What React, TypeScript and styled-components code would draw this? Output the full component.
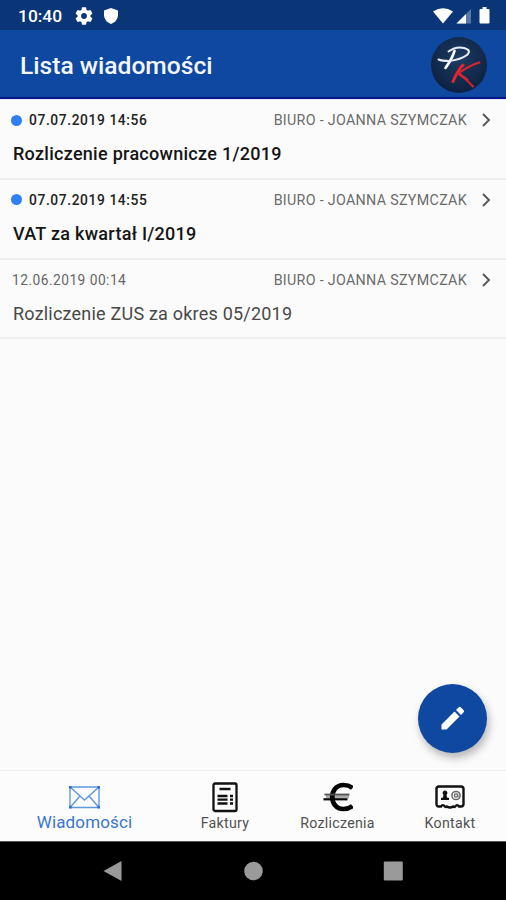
import React from "react";
import styled, { createGlobalStyle } from "styled-components";

const Global = createGlobalStyle`
  *{box-sizing:border-box}
  body{margin:0;background:#fafafa;font-family:Roboto,"Liberation Sans",sans-serif}
`;
const Screen = styled.div`
  width:506px;height:900px;display:flex;flex-direction:column;
  background:#fbfbfb;overflow:hidden;position:relative;
`;
const StatusBar = styled.div`
  height:30px;background:#0a3576;display:flex;align-items:center;
  justify-content:space-between;padding:1px 13px 0 18px;color:#fff;
`;
const StatusGroup = styled.div<{ $gap: number }>`
  display:flex;align-items:center;gap:${(p) => p.$gap}px;
`;
const Clock = styled.span`
  width:44px;margin-right:2px;font-size:17.4px;font-weight:500;line-height:20px;white-space:nowrap;
`;
const AppBar = styled.header`
  height:69px;background:#0e48a0;border-bottom:2px solid #06158c;
  display:flex;align-items:center;justify-content:space-between;padding:2px 19px 0 20px;
`;
const Title = styled.h1`
  margin:2px 0 0;font-size:24.6px;font-weight:500;color:#f4f7ff;line-height:30px;white-space:nowrap;
`;
const List = styled.main`
  flex:1;border-top:1px solid #e9e9f2;
`;
const Row = styled.article`
  height:79.8px;padding:10px 13px 0 12px;border-bottom:2px solid #eee;
`;
const Meta = styled.div`
  display:flex;align-items:center;height:20px;font-size:14.3px;line-height:20px;
`;
const Dot = styled.i`
  width:11px;height:11px;border-radius:50%;background:#2f80f5;margin:0 7px 0 -1px;
`;
const DateText = styled.span<{ $unread: boolean }>`
  font-size:13.8px;
  font-weight:${(p) => (p.$unread ? 500 : 400)};color:${(p) => (p.$unread ? "#222" : "#666")};
  letter-spacing:${(p) => (p.$unread ? 0.6 : 0.45)}px;white-space:nowrap;
`;
const Sender = styled.span`
  margin-left:auto;margin-right:12px;color:#6b6b6b;letter-spacing:.3px;white-space:nowrap;
`;
const Subject = styled.h2<{ $unread: boolean }>`
  margin:12px 0 0 1px;font-size:18px;line-height:24px;
  letter-spacing:${(p) => (p.$unread ? 0.28 : 0.21)}px;
  font-weight:${(p) => (p.$unread ? 500 : 400)};color:${(p) => (p.$unread ? "#151515" : "#484848")};
`;
const Fab = styled.button`
  position:absolute;left:418px;top:684px;width:69px;height:69px;border:0;border-radius:50%;padding:0 0 2px;
  background:#0e48a0;box-shadow:2px 5px 9px rgba(0,0,0,.28);display:grid;place-items:center;
`;
const TabBar = styled.nav`
  height:71px;border-top:1px solid #f0f0f0;background:#fcfcfc;display:grid;
  grid-template-columns:169px 112px 113px 112px;
`;
const Tab = styled.div<{ $active?: boolean }>`
  display:flex;flex-direction:column;align-items:center;padding-top:11px;white-space:nowrap;
  color:${(p) => (p.$active ? "#3b76cb" : "#505050")};
  font-size:${(p) => (p.$active ? 17 : 14.2)}px;line-height:20px;letter-spacing:${(p) => (p.$active ? 0.15 : 0.28)}px;
  svg{height:31px;flex:none}
  span{margin-top:${(p) => (p.$active ? -1 : 0)}px}
`;
const SystemNav = styled.div`
  height:59px;background:#000;border-top:1px solid #555;display:flex;justify-content:center;gap:120px;
  padding:18px 0 0;
`;

const Logo = () => (
  <svg width="56" height="56" viewBox="0 0 56 56">
    <defs>
      <radialGradient id="disc" cx="50%" cy="38%" r="62%">
        <stop offset="0" stopColor="#1c3c63" />
        <stop offset="1" stopColor="#0d2140" />
      </radialGradient>
    </defs>
    <circle cx="28" cy="28" r="28" fill="url(#disc)" />
    <g fill="none" strokeLinecap="round" strokeLinejoin="round">
      <path d="M23.500 14Q21 22 14.500 31" stroke="#fff" strokeWidth="2.600" />
      <path d="M17.500 14.500Q25 9 33 11Q41 13 36 18Q30 22.500 18 24Q11 24 7.500 22.500" stroke="#e8edf5" strokeWidth="2" />
      <path d="M32 28Q27 33 22 44.500" stroke="#e8252d" strokeWidth="3" />
      <path d="M48.500 25.500Q38 28.500 27.500 36.500Q34 41 42 49.500" stroke="#dd232d" strokeWidth="2" />
      <path d="M27.500 36.500L36 42.500" stroke="#dd232d" strokeWidth="2.600" />
    </g>
  </svg>
);

const rows = [
  { date: "07.07.2019 14:56", subject: "Rozliczenie pracownicze 1/2019", unread: true },
  { date: "07.07.2019 14:55", subject: "VAT za kwartał I/2019", unread: true },
  { date: "12.06.2019 00:14", subject: "Rozliczenie ZUS za okres 05/2019", unread: false },
];

export default function App() {
  return (
    <>
      <Global />
      <Screen>
        <StatusBar>
          <StatusGroup $gap={11}>
            <Clock>10:40</Clock>
            <svg width="18" height="18" viewBox="2 2 20 20" fill="#fff">
              <path d="M19.140 12.940c.04-.3.06-.61.06-.94s-.02-.64-.07-.94l2.030-1.580a.5.5 0 0 0 .12-.61l-1.920-3.320a.5.5 0 0 0-.59-.22l-2.390.96a7 7 0 0 0-1.620-.94L14.400 2.810a.5.5 0 0 0-.48-.41h-3.840a.5.5 0 0 0-.47.41l-.36 2.540a7 7 0 0 0-1.620.94l-2.390-.96a.5.5 0 0 0-.59.22L2.740 8.870a.5.5 0 0 0 .12.61l2.030 1.580a6 6 0 0 0 0 1.880l-2.030 1.580a.5.5 0 0 0-.12.61l1.920 3.320c.12.22.37.29.59.22l2.390-.96c.5.38 1.030.7 1.620.94l.36 2.540c.05.24.24.41.48.41h3.840c.24 0 .44-.17.47-.41l.36-2.540a7 7 0 0 0 1.620-.94l2.390.96c.22.08.47 0 .59-.22l1.920-3.320a.5.5 0 0 0-.12-.61zM12 15.200a3.200 3.200 0 1 1 0-6.400 3.200 3.200 0 0 1 0 6.400z" />
            </svg>
            <svg width="14" height="16" viewBox="0 0 14 16" fill="#fff"><path d="M7 0 14 2.500V7.500Q13.500 13.500 7 16 .5 13.500 0 7.500V2.500Z" /></svg>
          </StatusGroup>
          <StatusGroup $gap={3}>
            <svg width="20" height="16" viewBox="0 0 20 16" fill="#fff"><path d="M0 3.500Q10-3 20 3.500L10 15.500Z" /></svg>
            <svg width="16" height="16" viewBox="0 0 16 16"><path d="M15 1V15.500H.5Z" fill="#5879a5" /><path d="M10 6V15.500H.5Z" fill="#fff" /></svg>
            <svg width="18" height="17" viewBox="0 0 18 17" fill="#fff"><path d="M7.500 0h4v2h2a1 1 0 0 1 1 1v12.500a1 1 0 0 1-1 1h-8a1 1 0 0 1-1-1V3a1 1 0 0 1 1-1h2z" /></svg>
          </StatusGroup>
        </StatusBar>
        <AppBar><Title>Lista wiadomości</Title><Logo /></AppBar>
        <List>
          {rows.map((r) => (
            <Row key={r.date}>
              <Meta>
                {r.unread && <Dot />}
                <DateText $unread={r.unread}>{r.date}</DateText>
                <Sender>BIURO - JOANNA SZYMCZAK</Sender>
                <svg width="14" height="16" viewBox="0 0 14 16" fill="none" stroke="#555" strokeWidth="1.900"><path d="m4 2 6 6-6 6" /></svg>
              </Meta>
              <Subject $unread={r.unread}>{r.subject}</Subject>
            </Row>
          ))}
        </List>
        <TabBar>
          <Tab $active>
            <svg width="31" height="31" viewBox="0 0 31 31" fill="none" stroke="#5f97dd" strokeWidth="1.400">
              <path d="M1 5h29v20.500H1ZM1 5l14.500 13L30 5M1 25.500l10-11.500M30 25.500 20 14" />
              <path d="M0 4h2.500v2.500H0ZM28.500 4H31v2.500h-2.500ZM0 24h2.500v2.500H0ZM28.500 24H31v2.500h-2.500Z" fill="#2f70cd" stroke="none" />
            </svg>
            <span>Wiadomości</span>
          </Tab>
          <Tab>
            <svg width="26" height="31" viewBox="0 0 26 31" fill="none" stroke="#111" strokeWidth="2.300">
              <rect x="1.500" y="1.500" width="23" height="27.500" rx="1.500" />
              <path d="M7.500 7h11M5.500 14h10M5.500 17.700h10M5.500 21.500h10M18 14h3M18 17.700h3M18 21.500h3" />
            </svg>
            <span>Faktury</span>
          </Tab>
          <Tab>
            <svg width="30" height="31" viewBox="0 0 30 31" fill="none" stroke="#050505">
              <path d="M3 14.500h23" stroke="#aaa" strokeWidth="3" />
              <path d="M29.500 6Q26 3 20.500 3C5.500 3 5.500 27 20.500 27Q26 27 29.500 24" strokeWidth="4.700" />
              <path d="M1.500 12.500h25" stroke="#555" strokeWidth="1.800" />
              <path d="M.5 17.300h24" strokeWidth="2.200" />
            </svg>
            <span>Rozliczenia</span>
          </Tab>
          <Tab>
            <svg width="30" height="31" viewBox="0 0 30 31" fill="none" stroke="#111" strokeWidth="2.400">
              <path d="M6 24.500H4q-2.500 0-2.500-2.500V7Q1.500 4.500 4 4.500h22q2.500 0 2.500 2.500v15q0 2.500-2.500 2.500h-2q-1.800-2.800-3.800 0-1 1-2 0-1.700 1-3.200 1t-3.200-1q-1 1-2 0Q7.800 21.700 6 24.500Z" />
              <path d="M10 8.500a2.400 2.400 0 0 1 1.600 4.200L12 15.500l2 .6V18H6v-1.900l2-.6.4-2.800A2.400 2.400 0 0 1 10 8.500Z" fill="#111" stroke="none" />
              <circle cx="21" cy="13.500" r="4.100" stroke="#666" strokeWidth="1.500" /><circle cx="21" cy="13.500" r="1.600" stroke="#666" strokeWidth="1.400" />
              <path d="M22.800 11.500v3.500h2" stroke="#777" strokeWidth="1" />
            </svg>
            <span>Kontakt</span>
          </Tab>
        </TabBar>
        <SystemNav>
          <svg width="20" height="22" viewBox="0 0 20 22"><path d="M.500 11 18.500 1V21Z" fill="#9a9a9a" /></svg>
          <svg width="20" height="22" viewBox="0 0 20 22"><circle cx="10.500" cy="11" r="9.300" fill="#9a9a9a" /></svg>
          <svg width="20" height="22" viewBox="0 0 20 22"><rect x=".8" y="1.500" width="19" height="19" rx="1" fill="#9a9a9a" /></svg>
        </SystemNav>
        <Fab aria-label="Nowa wiadomość">
          <svg width="24" height="24" viewBox="0 0 24 24" fill="#fff"><path d="M.5 18.500 13.500 5.500l5 5-13 13h-5ZM15 4l2.700-2.700q1-1 2 0l3 3q1 1 0 2L20 9Z" /></svg>
        </Fab>
      </Screen>
    </>
  );
}
